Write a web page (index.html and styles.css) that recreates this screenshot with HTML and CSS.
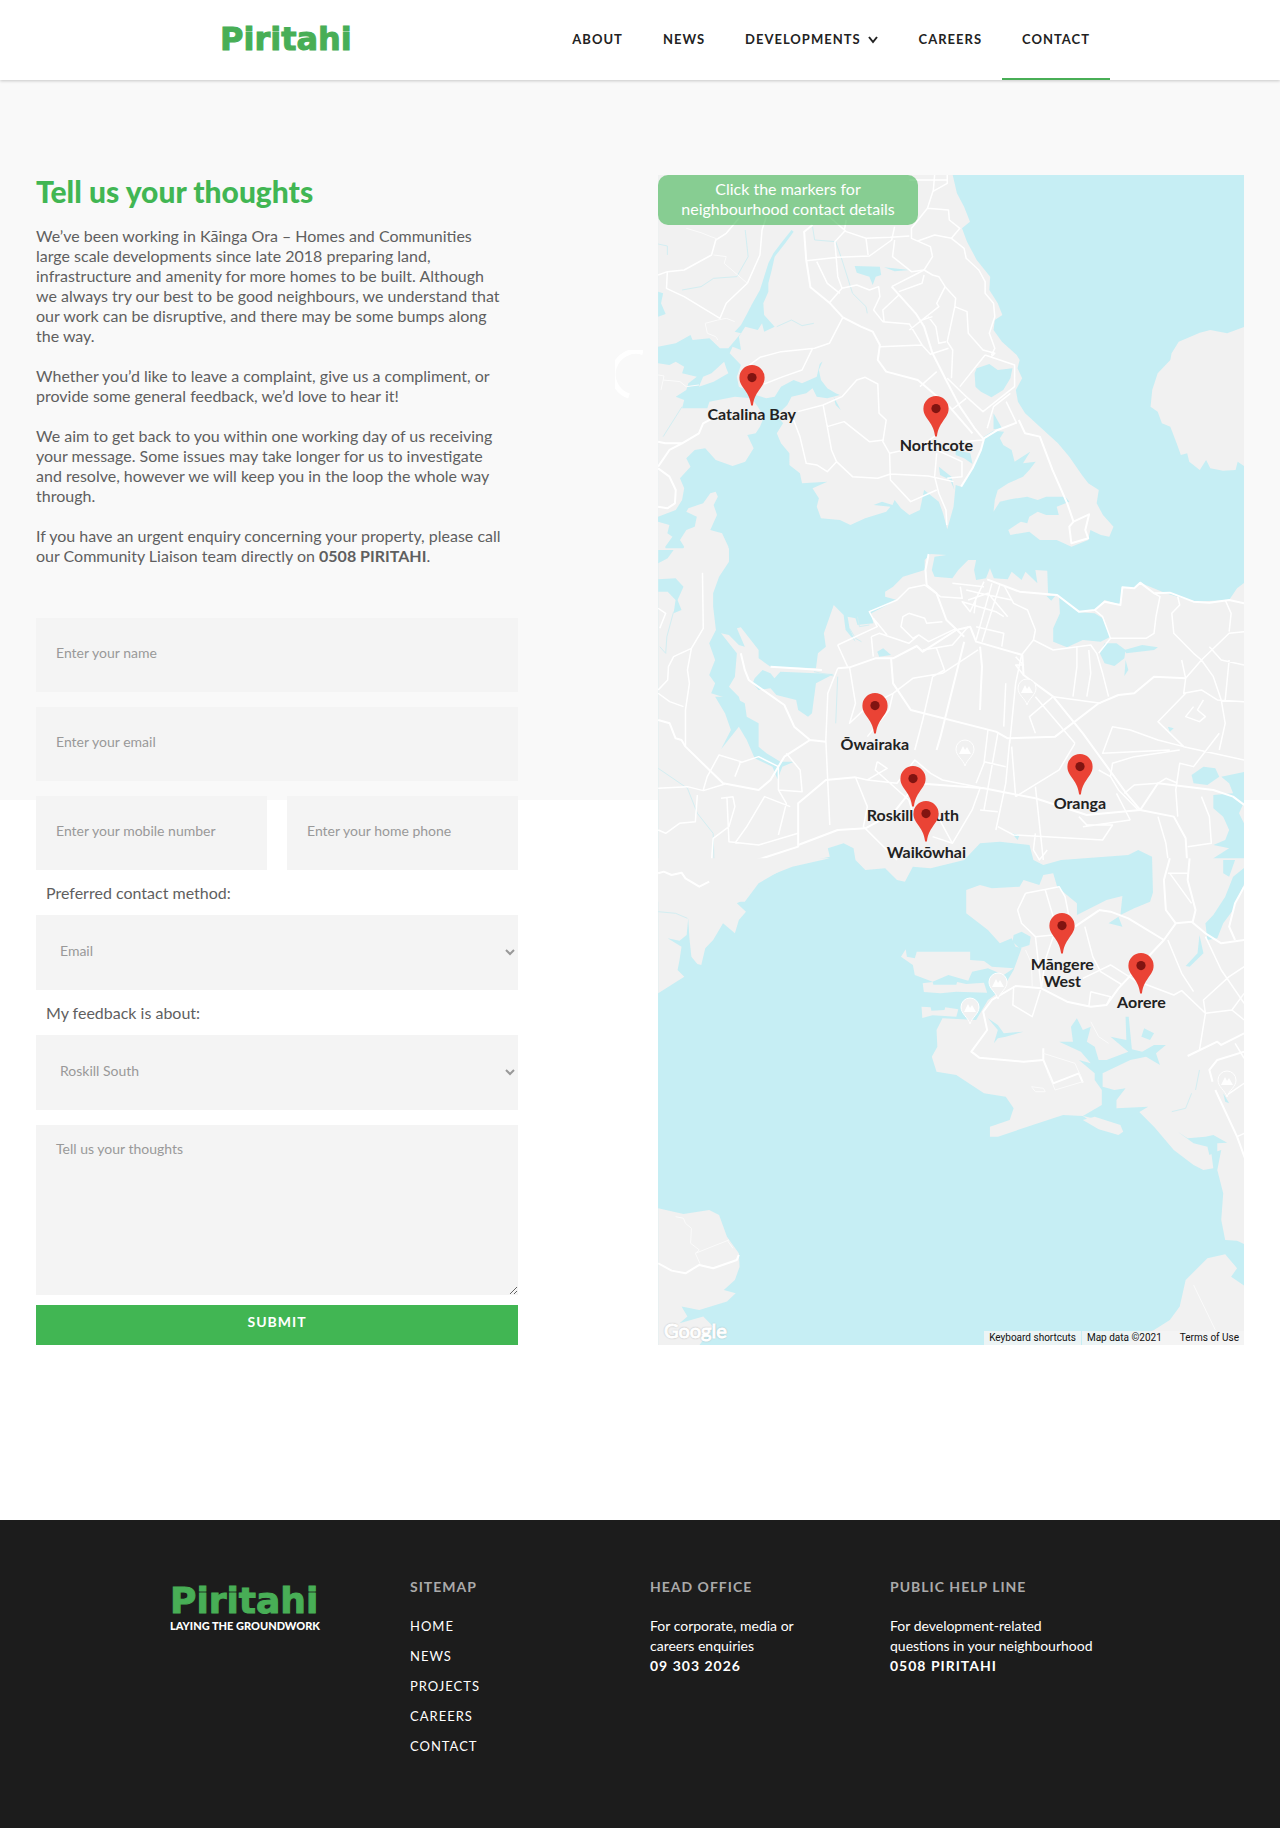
FILE: index.html
```html
<!DOCTYPE html>
<html lang="en">
<head>
<meta charset="utf-8">
<meta name="viewport" content="width=device-width, initial-scale=1">
<title>Contact | Piritahi</title>
<link rel="stylesheet" href="styles.css">
</head>
<body>
<header class="header">
  <div class="header-inner">
    <a class="logo" href="#">Piritahi</a>
    <nav class="nav" aria-label="Main">
      <a href="#">About</a>
      <a href="#">News</a>
      <a href="#">Developments
        <svg class="chevron" viewBox="0 0 12 12" aria-hidden="true"><path d="M2 4l4 5 4-5"/></svg>
      </a>
      <a href="#">Careers</a>
      <a class="active" href="#" aria-current="page">Contact</a>
    </nav>
  </div>
</header>

<main class="contact">
  <section class="feedback">
    <h1>Tell us your thoughts</h1>
    <div class="copy">
      <p>We’ve been working in Kāinga Ora – Homes and Communities<br>large scale developments since late 2018 preparing land,<br>infrastructure and amenity for more homes to be built. Although<br>we always try our best to be good neighbours, we understand that<br>our work can be disruptive, and there may be some bumps along<br>the way.</p>
      <p>Whether you’d like to leave a complaint, give us a compliment, or<br>provide some general feedback, we’d love to hear it!</p>
      <p>We aim to get back to you within one working day of us receiving<br>your message. Some issues may take longer for us to investigate<br>and resolve, however we will keep you in the loop the whole way<br>through.</p>
      <p>If you have an urgent enquiry concerning your property, please call<br>our Community Liaison team directly on <strong>0508 PIRITAHI</strong>.</p>
    </div>
    <form class="form">
      <input class="field" type="text" aria-label="Name" placeholder="Enter your name">
      <input class="field" type="email" aria-label="Email" placeholder="Enter your email">
      <div class="pair">
        <input class="field" type="tel" aria-label="Mobile number" placeholder="Enter your mobile number">
        <input class="field" type="tel" aria-label="Home phone" placeholder="Enter your home phone">
      </div>
      <div class="choice">
        <label for="method">Preferred contact method:</label>
        <select class="field select" id="method"><option>Email</option><option>Phone</option></select>
      </div>
      <div class="choice">
        <label for="about">My feedback is about:</label>
        <select class="field select" id="about"><option>Roskill South</option><option>Northcote</option><option>Oranga</option></select>
      </div>
      <textarea class="field message" aria-label="Your thoughts" placeholder="Tell us your thoughts"></textarea>
      <button class="submit" type="submit">Submit</button>
    </form>
  </section>

  <section class="map-wrap" aria-label="Neighbourhood map">
    <svg class="loader" viewBox="0 0 28 50" aria-hidden="true"><path d="M28 2.500A22.500 22.500 0 0 0 14 46"/></svg>
    <div class="map">
      <svg class="map-art" viewBox="0 0 586 1170" preserveAspectRatio="xMidYMid slice" aria-hidden="true">
        <defs>
          <g id="peak">
            <path fill="#f1f1f1" stroke="#fff" d="M0 16C-2 9-9 6-9-1A9 9 0 0 1 9-1C9 6 2 9 0 16z"/>
            <path fill="#fff" d="M-6 4l4-8 2 4 2-3 4 7z"/>
          </g>
        </defs>
        <rect width="586" height="1170" fill="#c6eef4"/>

        <!-- North Shore, Hobsonville and Rangitoto -->
        <g transform="matrix(.4209 0 0 .3333 -58 -15)">
          <g class="land">
            <path d="M138 45H838L848 100 865 140 879 185 860 205 872 245 895 300 927 350 925 390 945 430 956 465 938 480 935 510 955 545 990 585 997 600 992 625 1003 655 988 690 993 725 1010 760 1045 800 1088 850 1115 890 1145 945 1160 970 1185 990 1180 1030 1195 1065 1220 1100 1210 1130 1190 1125 1165 1110 1160 1140 1120 1160 1085 1140 1045 1140 1020 1115 975 1125 970 1110 1000 1085 1015 1090 1020 1070 1040 1055 1060 1065 1090 1065 1085 1040 1115 1025 1105 1010 1060 1010 1040 1020 1015 1010 975 1018 950 1025 935 1055 938 1020 945 990 970 970 1005 950 1020 930 1035 905 1005 910 1022 875 985 905 978 870 958 855 950 835 960 815 935 812 912 830 905 870 885 925 858 980 845 975 840 1040 825 1108 815 1060 805 1025 790 1010 770 990 760 1050 735 1065 715 1045 700 1020 695 1035 670 1025 650 1035 690 1040 680 1055 630 1075 595 1095 570 1080 525 1075 515 1040 520 1015 505 985 540 965 480 970 475 940 450 915 450 880 430 850 420 820 435 790 420 765 445 735 455 710 490 700 505 685 515 710 540 715 570 705 560 700 540 685 525 660 520 630 530 600 545 585 522 612 515 650 480 670 460 660 430 680 415 710 395 715 370 705 350 690 330 680 325 650 335 615 308 580 315 560 335 570 330 530 345 500 375 510 385 490 390 515 415 500 390 465 388 430 400 395 400 370 408 330 415 290 440 250 460 215 455 210 430 250 412 280 400 310 390 350 380 390 360 435 350 460 335 495 320 515 335 520 305 565 285 565 260 535 220 540 215 525 180 550 138 560z"/>
            <path d="M138 610L165 615 180 605 200 620 195 640 230 650 210 670 205 690 180 710 200 720 195 745 255 745 260 725 320 710 360 715 375 740 390 770 380 800 370 820 350 825 365 865 345 905 315 918 275 900 250 865 225 870 205 895 215 920 190 955 200 985 195 1020 180 1050 138 1070z"/>
            <path d="M235 680L245 650 265 640 295 605 300 625 305 640 270 665z"/>
            <path d="M275 995L280 1010 270 1035 278 1065 262 1110 290 1120 305 1160 306 1200H185L200 1160 190 1140 205 1110 225 1100 230 1070 205 1055 210 1045 245 1030 262 1000z"/>
            <path d="M138 1085L165 1095 160 1120 172 1130 155 1160 160 1200H138z"/>
            <path d="M1532 500L1490 520 1450 510 1425 518 1375 545 1358 580 1355 600 1325 640 1312 690 1308 740 1325 755 1335 790 1355 800 1370 850 1380 885 1395 880 1400 905 1425 930 1440 900 1450 925 1480 932 1510 930 1515 905 1532 920z"/>
          </g>
          <g class="water">
            <path d="M890 640L895 625 925 612 945 630 980 625 975 655 958 690 930 712 905 695 892 680z"/>
            <path d="M605 318L665 320 668 345 655 350 648 375 640 350 610 338zM675 322L735 330 700 334z"/>
            <path d="M845 870L880 880 885 912 865 895 845 885zM935 760L955 805 935 808zM138 395L150 400 145 430 156 462 138 470z"/>
            <path d="M555 710L572 750 560 735zM805 920L835 950 842 990 832 960 808 945z"/>
          </g>
          <g class="creek">
            <path d="M345 210L352 290 325 350 270 355 240 380 195 390M505 200L510 240 560 245 575 300 600 400 632 440 635 460M420 500L455 480 480 497 508 490M138 252L160 258 160 285M195 740L180 770 150 830"/>
          </g>
          <g class="road wide">
            <path d="M505 195L485 215 490 300 500 382 545 428 577 472 620 500 648 515 665 555 660 600 680 635 755 660 830 740 885 820"/>
            <path d="M693 380L750 460 770 500 790 580 820 655 855 740 890 805 912 838 905 870 885 925 858 980"/>
            <path d="M912 835L945 810 990 788M995 780L1010 820 1045 830 1075 930 1110 1030 1125 1085"/>
            <path d="M1125 1085L1162 1063 1153 1110 1160 1135 1120 1150 1115 1100z"/>
            <path d="M138 920L165 870 195 850 235 820 245 790 275 770M138 925L165 950 180 990 178 1030 160 1045 138 1040M138 845L155 850 195 850"/>
          </g>
          <g class="road">
            <path d="M795 45L792 90 778 145 740 205 740 235 785 260 790 290 770 330 693 380M825 45V70L790 95M735 60H825M778 145L828 150 830 180 855 205 835 235 795 225 755 243M835 235L865 265 870 295 900 330 915 365 915 400 935 430 938 470 925 520 938 565 930 585"/>
            <path d="M540 165L585 215 632 235 690 232 735 228M585 180L580 215 558 245 565 350 575 385 545 428M632 235L637 285M490 302L565 292 640 288 693 240 700 200M700 240L695 290 740 335 770 330 790 345 805 350 820 380 845 415 843 440 825 545 838 570 835 655M770 345L765 370 710 395M575 385L610 375 640 390 662 380 665 410 650 450 672 485 735 492 765 555 665 560M710 405L672 450 675 485M820 380L800 430 805 440 735 510M843 440L872 455 875 520 910 570 938 580 930 590M780 470L798 500 805 550 822 545M765 480L790 470M765 555L785 583 828 565M915 585L855 680M915 585L985 615 985 680 910 755 870 710 825 655M800 635L760 680M975 700L935 740 920 805M965 725L990 790"/>
            <path d="M577 472L545 550 510 565 430 575 380 592 350 620M505 565L480 630 435 650 390 672M470 755L530 735 575 710 610 660 630 652 660 672 663 760 680 780 672 845 688 880 690 960 738 1025 800 990M530 735L540 800 550 870 562 905 540 935 515 915 490 910 475 830 460 780M540 800L580 785 640 845 675 840M562 905L600 950 660 955 690 942 780 948 840 965M688 880L760 860 800 825M800 870L860 905V950L825 955M800 880L795 950 805 1000 822 1050 824 1095M870 715L835 750M860 845L910 840M515 305L540 370 570 400"/>
            <path d="M138 345L160 335 200 330 265 285 275 240 300 220 330 175M160 335L158 385 200 410 285 475 300 430 350 370 380 285 385 210 395 170"/>
          </g>
          <g class="lane"><path d="M205 205L240 218 280 238M270 285L300 290 295 310 350 370M250 490L280 480 300 475 320 485M250 490L255 520 275 530 280 540M138 645L152 648 145 690M150 660L190 665 205 680 235 675"/></g>
        </g>

        <!-- Central isthmus -->
        <g transform="matrix(.3954 0 0 .3333 -18 375)">
          <g class="land">
            <path d="M46-5H225V35L200 80 185 130 185 170 192 240 175 280 190 330 175 375 190 400 180 430 220 445 215 480 265 500 250 440 225 410 240 380 245 310 205 250 225 255 250 285 265 290 245 235 255 232 300 300 300 325 330 350 445 355 450 310 470 290 465 250 490 165 515 195 520 240 545 275 530 235 525 200 545 205 550 225 590 220 585 190 625 165 650 150 620 140 620 125 640 110 665 80 720 60 720 30 735 12 775 15 745 20 738 60 745 80 790 85 805 60 830 30 850 30 845 60 850 90 875 85 885 55 895 85 930 88 940 65 965 90 975 65 1005 100 1000 60 1030 62 1032 130 1060 138 1110 185 1150 180 1175 150 1215 165 1220 110 1250 115 1265 98 1330 130 1400 155 1490 150 1510 115 1532 95V1060H1298L1295 920 1260 900 1235 915 1065 930 1020 945 995 930 985 885 910 875 860 880 820 930 735 955 690 950 670 995 650 990 620 955 570 960 545 930 540 895 515 880 475 895 480 920 380 945 300 1000 265 1055H46z"/>
          </g>
          <g class="water">
            <path d="M290 385L310 360 330 370 340 385 355 365 490 372 445 400 435 490 425 500 400 480 395 450 345 435 330 415 300 420 285 400z"/>
            <path d="M190 440L235 440 265 460 270 500 300 520 300 590 320 610 355 635 390 635 360 650 348 688 335 650 290 625 270 570 250 530 205 598 230 540 215 490z"/>
            <path d="M1060 142L1110 187 1150 190 1170 205 1190 260 1165 275 1120 270 1080 292 1045 275 1045 235 1062 190z"/>
            <path d="M1175 280L1205 280 1228 300 1225 325 1200 348 1175 340 1163 310zM1225 300L1270 285 1310 292 1300 300 1230 310zM1228 330L1235 360 1225 378z"/>
            <path d="M1395 675L1425 650 1455 655 1465 680 1435 705 1400 700z"/>
            <path d="M1532 665L1470 680 1490 700 1500 730 1450 735 1450 775 1475 800 1490 840 1480 870 1450 885 1490 895 1450 925 1445 960 1475 990 1500 945 1532 930 1532 830 1515 790 1532 745z"/>
            <path d="M46 88L90 85 110 110 95 150 105 180 85 190 90 150 70 125 46 125zM46 0H85L70 25 46 40zM600 305L615 295 635 315 605 320zM940 850L960 855 955 870zM1335 530L1350 535 1340 545zM1028 138H1050L1040 152z"/>
            <path d="M1532 975L1490 1000 1475 1055H1515L1532 1020z"/>
          </g>
          <g class="creek"><path d="M85 185L68 260 65 310 50 290M46 655L120 715 145 790 185 850 188 970M530 235L545 265 560 275M440 365L490 378M500 380L495 520M550 200L555 230 580 225"/></g>
          <g class="road wide">
            <path d="M878 88L960 125 1055 135 1110 185 1150 180 1175 155 1215 165 1220 112 1250 115 1265 98 1300 130 1340 128 1400 155 1440 158 1490 150 1528 160"/>
            <path d="M330 350L460 360M500 355L530 352 595 325 640 325 700 288 715 305 800 240 835 230 850 275 967 315 970 375 1045 440 1120 550 1230 730 1265 780 1350 800 1380 865 1385 960"/>
            <path d="M255 310L265 360 275 390 365 465 390 530 430 570 470 575M430 570L365 620 330 690 300 720 210 700 115 590 105 570 90 565 75 520 46 510"/>
            <path d="M400 885L500 840 570 835 640 790 700 700 870 715 1000 745 1130 795 1265 780 1310 700 1450 720 1500 740 1528 765"/>
            <path d="M46 970L60 965 80 975 105 965 115 985 150 1010 175 1000 185 985 210 980 215 935 270 940 400 890 400 760 470 690 545 682"/>
            <path d="M820 275L760 560 750 600M730 12L722 60 725 105 750 130 775 210 820 260M860 290L865 350 862 420 860 480M635 325L640 400 685 480 900 545 930 565 1050 560 1160 460 1210 435 1250 430 1300 380 1380 385"/>
          </g>
          <g class="road">
            <path d="M158 68L160 235 130 295 85 320 72 350 70 390 46 420M130 295L120 360 125 400 115 480 115 590M46 430L75 455 110 470M46 175L65 190 50 235M46 715L120 710 160 722 215 702M46 840L65 850 100 820 140 815 145 735M160 720L170 680 200 615 255 635 240 680M250 640L300 620 350 650 350 720 370 760 350 855M220 745L225 875 300 885 400 850M205 745L235 740 240 770 225 830 185 865 180 950 190 985M240 880L270 830 315 740 380 770M350 720L410 725 405 660 370 610"/>
            <path d="M500 355L475 430 470 570 480 825M530 352L545 460 530 520 575 470 640 430 690 385 765 370 855 300M640 430L630 480 575 560M500 285L600 230 580 185 650 150 680 115 720 105 760 140 815 145 810 110M500 285L525 350M590 205L625 255M585 260L605 250 680 280 705 255M585 260L590 320M680 190L665 200 660 230 690 265 705 255 730 275 800 235M680 190L720 205 725 220 765 215M715 300L790 285 830 230M740 380L715 510 695 600M750 295L770 360 740 380"/>
            <path d="M870 95L835 185 815 155 900 185 920 200M890 100L850 270M910 105L865 275M825 120L860 130 940 150M830 150L880 130 930 200M850 140L845 190M920 105L945 160 980 180 1000 240 995 270 965 315 950 400 935 580M790 100L870 110M850 230L920 250 915 290M995 270L1045 300 1140 285 1155 310 1170 370 1185 440M1105 290V350L1095 440M1135 300L1140 370 1130 440M925 400L920 530M880 540L870 640 850 700M905 550L870 780M935 570L925 700 900 840M870 635L925 650M940 590L950 740M1100 580L1060 660 950 740M1000 710L1020 930M1000 550L985 500 1045 440M970 375L950 345H970L950 320M1045 440L1165 460M1000 440L1100 580"/>
            <path d="M1300 130L1315 140 1305 200 1300 250 1280 265 1190 265 1160 310M1190 265L1170 200 1150 180M1360 140L1365 165 1345 190 1350 250 1400 310 1420 330 1490 250 1528 245M1480 150L1495 190 1490 245M1420 330L1380 385 1375 430 1420 420 1460 450 1528 455M1420 330L1450 380 1470 450 1480 520 1465 600M1380 430L1310 515 1375 590 1528 630M1375 590L1310 570 1240 540 1195 530 1170 610 1340 600M1400 470L1380 500 1415 515 1430 500 1410 480 1425 450M1465 550L1400 650 1365 640 1355 720 1360 800M1365 600L1250 620 1195 640 1190 680 1160 660M1190 680L1210 720 1260 780M1225 730L1250 705 1310 700 1330 685 1360 700M1240 810L1205 730M1380 385L1370 330M1440 290L1470 330 1528 345M1490 330L1480 450M1385 960L1340 970 1325 1050M1340 970L1330 880 1310 800M1370 970L1390 1050M1385 890L1445 880 1440 800 1420 740"/>
            <path d="M600 635L625 655 575 690 545 682 575 770 565 830 650 930M600 635L595 660 680 750 690 790 740 770 790 880 840 780 860 715M740 860L790 880M575 690L650 700 695 630 735 670 765 690 870 715M860 780L905 785M905 830L945 855 1170 870 1195 825 1130 825 1110 800M1000 850L995 900 1010 930 1030 900M1240 810L1120 830"/>
          </g>
        </g>

        <!-- Manukau Harbour, Māngere and the airport -->
        <g transform="matrix(.3954 0 0 .3333 -18 685)">
          <g class="land">
            <path d="M46-5H480L385 20 300 60 270 90 270 115 245 130 268 155 250 180 240 220 210 190 185 240 165 265 155 315 145 312 130 290 125 235 122 175 118 225 100 242 70 235 105 260 100 300 95 330 112 350 46 400z"/>
            <path d="M1298-5V95L1290 125 1250 145 1215 165 1220 108 1180 120 1105 165 1105 130 1085 110 1055 80 1045 40 1020 45 1010 75 970 60 960 80 890 85 860 75 825 90V160L880 210 910 250 940 235 950 260 965 265 945 330 915 390 880 420 850 480 765 475 750 510 752 560 738 590 750 635 800 645 870 700 925 710 945 745 935 780 885 800 885 830 905 830 1070 765 1120 768 1160 800 1262 755 1300 800 1350 870 1400 915 1425 930 1450 925 1445 880 1470 870 1460 930 1475 1000 1470 1080 1480 1140 1510 1142 1532 1155V-5z"/>
            <path d="M660 290L672 268 675 290 695 295 700 275 835 275 835 300 870 303 890 320 945 325 920 345 880 325 840 335 830 362 780 345 740 365 695 345 690 315z"/>
            <path d="M715 370L740 366 742 374H800L802 366 825 372 870 368 878 398 800 395 760 400 718 396zM712 440L735 442 737 452 770 450 772 442 805 448 800 470 740 466 714 474z"/>
            <path d="M46 1045L110 1062 175 1050 200 1065 220 1130 250 1180 252 1220 240 1260 212 1290 242 1300 220 1325 150 1350 105 1340 120 1370 100 1390 160 1370 185 1400 150 1456H46z"/>
            <path d="M1480 1183L1435 1195 1380 1260 1365 1340 1340 1380 1300 1410 1220 1456H1532V1280L1495 1250 1510 1225z"/>
          </g>
          <g class="water">
            <path d="M1120 768L1168 735 1168 690 1150 660 1150 640 1110 600 1140 610 1115 575 1060 545 1095 545 1090 500 1105 475 1120 510 1140 500 1130 545 1150 560 1160 600 1180 600 1235 575 1190 530 1230 540 1228 470 1236 470 1244 568 1270 575 1300 555 1330 555 1305 580 1315 615 1280 590 1240 600 1170 640 1170 680 1200 690 1228 685 1205 720 1205 745 1285 740 1262 757 1200 790z"/>
            <path d="M1360 815L1385 835 1430 830 1450 825 1485 848 1460 850 1460 875 1440 885 1435 860 1400 850z"/>
            <path d="M945 225L965 215 988 230 985 255 960 265 942 245zM880 475L905 495 920 520 970 515 925 530 905 535 895 550 905 510zM1275 505L1300 520 1290 540 1268 530zM1185 190L1210 170 1220 200zM1415 225L1425 280 1390 320 1380 318 1410 280zM1500 50L1480 110 1450 165 1430 190 1435 240 1460 235 1475 190 1500 150 1532 60V20zM1475 0H1505L1490 50 1475 40zM1475 700L1490 730 1480 725z"/>
          </g>
          <g class="land"><path d="M1120 780L1150 770 1215 795 1222 815 1210 825 1160 808z"/></g>
          <g class="creek"><path d="M46 155L90 160 120 175M1415 630L1405 690M1395 700L1380 745 1345 755"/></g>
          <g class="road wide">
            <path d="M1160 150L1190 155 1235 175 1325 240 1355 190 1395 185 1430 220 1470 250 1528 240M1325 240L1210 385 1180 435 1140 440 1080 425 1015 385 950 378 890 420 868 455 878 510 838 575 858 593 970 605 1020 600M1100 200L1160 152M1340 -5L1325 60 1330 150 1355 190M1390 -5L1385 60 1405 150 1398 185"/>
            <path d="M1020 565V600L1045 670 1110 640 1120 668M1385 588L1460 545 1470 555 1528 520M1455 690L1510 830 1530 895M1528 575L1460 600 1440 630 1448 665M1505 240L1490 200 1505 130 1528 80"/>
            <path d="M46 1210L80 1232 115 1240 150 1215 185 1225 245 1200 250 1185M46 40L60 35 80 45 105 38 115 55 150 80 175 65"/>
          </g>
          <g class="road">
            <path d="M975 100L1060 80 1075 110 1085 170M975 100L955 150 965 190 1000 230 1015 385M1000 230L1045 225M1025 90L1045 170M1045 230L1025 300 1015 385M1125 200L1145 290 1165 335 1220 375M1120 355L1190 315 1250 360 1350 405 1370 392 1430 460 1415 570M1140 395L1190 410 1180 435M1140 395L1135 440M945 380L943 435 992 470 1013 390M1335 240L1370 340 1400 395M1340 40L1395 130M1335 40H1385M1430 460L1497 450 1528 480M1497 450L1528 400M1430 230L1470 330 1528 430M1430 460L1425 420 1490 350 1528 320M1485 705L1528 670M1510 830L1528 820M1505 550L1528 595"/>
          </g>
          <g class="lane"><path d="M975 270L990 310 992 380M1020 580L1100 610 1115 650M990 680L1020 685 1025 695 1000 695 990 680M1030 635L1050 690 1120 665M1140 485L1160 530 1185 550M90 1070L110 1075 115 1090 130 1105 128 1150 150 1170 140 1180 225 1140M140 1180L152 1212M220 1140L235 1165M1400 1275L1455 1410"/></g>
        </g>
        <use href="#peak" x="369" y="514"/><use href="#peak" x="307" y="575"/><use href="#peak" x="340" y="808"/><use href="#peak" x="312" y="833"/><use href="#peak" x="569" y="906"/>
      </svg>

      <svg class="defs" width="0" height="0" aria-hidden="true">
        <symbol id="pin" viewBox="0 0 26 41">
          <path fill="#ea4335" d="M13 0a12.600 12.600 0 0 1 12.600 12.600c0 5.400-2.600 8.400-5.800 12.900-3.200 4.600-4.900 8-5.800 14.200-.2 1.400-1.800 1.400-2 0-.9-6.200-2.600-9.600-5.800-14.200C3 21 .4 18 .4 12.600A12.600 12.600 0 0 1 13 0z"/>
          <circle cx="13" cy="12.600" r="4.600" fill="#811411"/>
        </symbol>
      </svg>
      <button class="marker catalina" type="button"><svg class="pin"><use href="#pin"/></svg><span>Catalina Bay</span></button>
      <button class="marker northcote" type="button"><svg class="pin"><use href="#pin"/></svg><span>Northcote</span></button>
      <button class="marker owairaka low" type="button"><svg class="pin"><use href="#pin"/></svg><span>Ōwairaka</span></button>
      <button class="marker roskill" type="button"><svg class="pin"><use href="#pin"/></svg><span>Roskill South</span></button>
      <button class="marker oranga" type="button"><svg class="pin"><use href="#pin"/></svg><span>Oranga</span></button>
      <button class="marker waikowhai low" type="button"><svg class="pin"><use href="#pin"/></svg><span>Waikōwhai</span></button>
      <button class="marker mangere low" type="button"><svg class="pin"><use href="#pin"/></svg><span>Māngere<br>West</span></button>
      <button class="marker aorere" type="button"><svg class="pin"><use href="#pin"/></svg><span>Aorere</span></button>

      <p class="hint">Click the markers for<br>neighbourhood contact details</p>
      <a class="google" href="#">Google</a>
      <div class="credits">
        <button type="button">Keyboard shortcuts</button>
        <span>Map data ©2021</span>
        <a href="#">Terms of Use</a>
      </div>
    </div>
  </section>
</main>

<footer class="footer">
  <div class="footer-inner">
    <div class="brand">
      <a class="logo" href="#">Piritahi</a>
      <p>Laying the groundwork</p>
    </div>
    <div>
      <h2>Sitemap</h2>
      <ul class="links">
        <li><a href="#">Home</a></li>
        <li><a href="#">News</a></li>
        <li><a href="#">Projects</a></li>
        <li><a href="#">Careers</a></li>
        <li><a href="#">Contact</a></li>
      </ul>
    </div>
    <div>
      <h2>Head office</h2>
      <p>For corporate, media or<br>careers enquiries</p>
      <a class="phone" href="tel:093032026">09 303 2026</a>
    </div>
    <div>
      <h2>Public help line</h2>
      <p>For development-related<br>questions in your neighbourhood</p>
      <a class="phone" href="tel:0508">0508 PIRITAHI</a>
    </div>
  </div>
</footer>
</body>
</html>
```

FILE: styles.css
```css
* { box-sizing: border-box; }

body {
  margin: 0;
  background: #fff;
  color: #5f5f5f;
  font: 16px/20px Lato, "Noto Sans", sans-serif;
}

h1, h2, p, ul { margin: 0; padding: 0; }
a { color: inherit; text-decoration: none; }
input, select, textarea, button { font-family: inherit; border: 0; border-radius: 0; margin: 0; }

.logo {
  color: #48ae56;
  font: bold 32px/32px "DejaVu Sans", sans-serif;
  -webkit-text-stroke: 1px #48ae56;
}

/* Header */
.header {
  position: relative;
  background: #fff;
  box-shadow: 0 1px 3px rgba(0, 0, 0, .2);
}
.header-inner {
  display: flex;
  justify-content: space-between;
  align-items: center;
  max-width: 940px;
  height: 80px;
  margin: 0 auto;
  padding: 0 0 2px 50px;
}
.nav { display: flex; }
.nav a {
  display: flex;
  align-items: center;
  gap: 6px;
  height: 78px;
  padding: 0 20px;
  color: #222;
  font-size: 13px;
  font-weight: bold;
  letter-spacing: 1px;
  text-transform: uppercase;
}
.nav .active { box-shadow: 0 2px 0 #48ae56; }
.chevron { width: 12px; height: 12px; fill: none; stroke: #222; stroke-width: 2; }

/* Contact section */
.contact {
  display: grid;
  grid-template-columns: 482fr 586fr;
  gap: 140px;
  padding: 95px 36px 175px;
  background: linear-gradient(#f9f9f9 720px, #fff 720px);
}
h1 { color: #41b653; font-size: 30px; font-weight: 900; line-height: 32px; }
.copy { display: grid; gap: 20px; margin: 19px 0 52px; white-space: nowrap; }

.form { display: grid; gap: 15px; }
.pair { display: grid; grid-template-columns: 1fr 1fr; gap: 20px; }
.field {
  width: 100%;
  min-width: 0;
  height: 74px;
  padding: 0 20px 6px;
  background: #f4f4f4;
  color: #999;
  font-size: 14px;
}
.field::placeholder { color: #999; opacity: 1; }
.choice { margin-top: -2px; }
.choice label { display: block; padding: 0 10px; line-height: 20px; margin-bottom: 12px; }
.select { height: 75px; padding-bottom: 4px; display: block; }
.message { display: block; height: 170px; padding: 15px 20px; line-height: 18px; resize: vertical; }
.submit {
  height: 40px;
  margin-top: -5px;
  padding: 0 0 7px;
  background: #41b653;
  color: #fff;
  font-size: 14px;
  font-weight: bold;
  letter-spacing: 1px;
  text-transform: uppercase;
}

/* Map */
.map-wrap { position: relative; }
.loader {
  position: absolute;
  left: -43px;
  top: 175px;
  width: 28px;
  height: 50px;
  fill: none;
  stroke: #fff;
  stroke-width: 5;
}
.map { position: relative; height: 100%; overflow: hidden; }
.map-art { position: absolute; inset: 0; width: 100%; height: 100%; }
.map-art path { vector-effect: non-scaling-stroke; stroke-linejoin: round; }
.land { fill: #f1f1f1; }
.water { fill: #c6eef4; }
.creek { fill: none; stroke: #d3eef2; stroke-width: 1; }
.road { fill: none; stroke: #fff; stroke-width: 1.500; }
.wide { stroke-width: 2; }
.lane { fill: none; stroke: #fbfbfb; stroke-width: 1; }
.defs { position: absolute; }

.marker {
  position: absolute;
  display: flex;
  flex-direction: column;
  align-items: center;
  width: 120px;
  margin-left: -60px;
  padding: 0;
  background: none;
  color: #222;
  font-size: 16px;
  font-weight: bold;
  line-height: 17px;
}
.pin { width: 26px; height: 41px; }
.marker span { margin-top: -1px; }
.low span { padding-top: 2px; }
.catalina { left: 16%; top: 190px; }
.northcote { left: 47.500%; top: 221px; }
.owairaka { left: 37%; top: 518px; }
.roskill { left: 43.500%; top: 591px; }
.oranga { left: 72%; top: 579px; }
.waikowhai { left: 45.800%; top: 626px; }
.mangere { left: 69%; top: 738px; }
.aorere { left: 82.500%; top: 778px; }

.hint {
  position: absolute;
  top: 0;
  left: 0;
  width: 260px;
  padding: 4px 0 6px;
  border-radius: 10px;
  background: rgba(65, 182, 83, .6);
  color: #fff;
  text-align: center;
}
.google {
  position: absolute;
  left: 6px;
  bottom: 3px;
  color: #fff;
  font-size: 20px;
  line-height: 24px;
  -webkit-text-stroke: 1px #fff;
  text-shadow: 0 0 2px #888;
}
.credits {
  position: absolute;
  right: 0;
  bottom: 0;
  display: flex;
  color: #111;
  font: 10px/14px Roboto, sans-serif;
}
.credits > * {
  padding: 0 5px;
  background: rgba(245, 245, 245, .8);
  color: #111;
  font: inherit;
}
.credits > span { margin-left: 1px; padding-right: 13px; }

/* Footer */
.footer { background: #1c1c1c; color: #fff; font-size: 14px; }
.footer-inner {
  display: grid;
  grid-template-columns: repeat(4, 1fr);
  max-width: 960px;
  min-height: 308px;
  margin: 0 auto;
  padding-top: 57px;
}
.footer-inner > div { padding: 0 10px; white-space: nowrap; }
.footer h2 {
  margin-bottom: 19px;
  color: #aaa;
  font-size: 14px;
  line-height: 20px;
  letter-spacing: 1px;
  text-transform: uppercase;
}
.brand .logo { display: block; margin-top: 8px; font-size: 36px; }
.brand p { font-size: 11px; line-height: 18px; font-weight: 900; text-transform: uppercase; }
.links { list-style: none; }
.links li { height: 30px; font-size: 13px; letter-spacing: 1px; text-transform: uppercase; }
.phone { display: block; font-weight: bold; letter-spacing: 1px; }
```
